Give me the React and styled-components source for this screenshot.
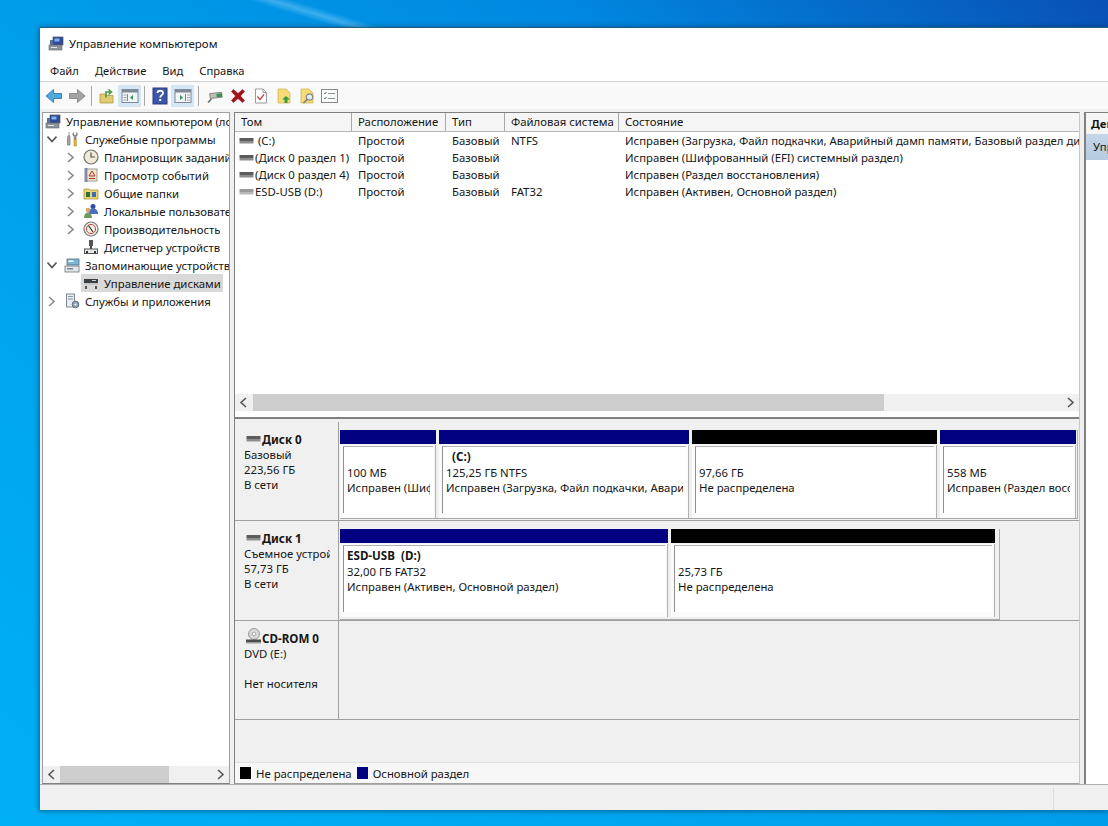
import styled, { createGlobalStyle } from 'styled-components';

const GlobalStyle = createGlobalStyle`
  html, body {
    margin: 0;
    padding: 0;
    height: 100%;
    overflow: hidden;
  }
  body {
    font-family: "Noto Sans", "Open Sans", sans-serif;
    font-size: 11.35px;
    color: #161616;
  }
`;

const Desktop = styled.div`
  width: 1108px;
  height: 826px;
  overflow: hidden;
  padding: 28px 0 0 40px;
  box-sizing: border-box;
  background:
    linear-gradient(17deg, transparent 77.4%, rgba(150, 215, 250, 0.4) 78%, transparent 78.6%),
    linear-gradient(to top right, #00b0f7 0%, #009eea 50%, #0088e0 75%, #0950b5 100%);
`;

const Window = styled.div`
  width: 1068px;
  height: 782px;
  display: flex;
  flex-direction: column;
  background: #f0f0f0;
  box-shadow: 0 -1px 0 #1f5f80, 0 0 5px 1px rgba(0, 40, 70, 0.55);
`;

const TitleBar = styled.div`
  height: 32px;
  flex: none;
  box-sizing: border-box;
  display: flex;
  align-items: center;
  gap: 5px;
  padding: 0 0 1px 8px;
  font-size: 11.5px;
  background: #fff;
`;

const MenuBar = styled.div`
  height: 21px;
  flex: none;
  display: flex;
  align-items: center;
  gap: 16px;
  padding-left: 10px;
  font-size: 11.2px;
  background: #fff;
  border-bottom: 1px solid #d0d0d0;
`;

const Toolbar = styled.div`
  height: 27px;
  flex: none;
  display: flex;
  align-items: center;
  padding-left: 2px;
  background: #f9f9f9;
`;

const ToolButton = styled.div`
  width: 23px;
  height: 22px;
  display: flex;
  align-items: center;
  justify-content: center;
  background: ${(p) => (p.$active ? '#d5e6f5' : 'transparent')};
`;

const ToolSeparator = styled.div`
  width: ${(p) => (p.$wide ? 9 : 7)}px;
  height: 20px;
  display: flex;
  justify-content: center;
  &::before {
    content: '';
    width: 1px;
    background: #a8a8a8;
  }
`;

const Main = styled.div`
  flex: 1;
  min-height: 0;
  display: flex;
  gap: 4px;
  padding: 3px 0 0 2px;
`;

const TreePane = styled.div`
  width: 188px;
  flex: none;
  box-sizing: border-box;
  display: flex;
  flex-direction: column;
  background: #fff;
  border: 1px solid #a0a0a0;
  border-bottom-color: #808080;
  overflow: hidden;
`;

const TreeList = styled.div`
  flex: 1;
  overflow: hidden;
`;

const TreeRow = styled.div`
  height: ${(p) => (p.$root ? 17 : 18)}px;
  display: flex;
  align-items: center;
  white-space: nowrap;
  padding-left: ${(p) => p.$indent}px;
`;

const Chevron = styled.div`
  width: 16px;
  flex: none;
  margin-right: 2px;
  display: flex;
  justify-content: center;
`;

const TreeLabel = styled.div`
  display: flex;
  align-items: center;
  gap: 5px;
  height: 18px;
  padding: 0 2px;
  background: ${(p) => (p.$selected ? '#d9d9d9' : 'transparent')};
`;

const ScrollBar = styled.div`
  height: 17px;
  flex: none;
  display: flex;
  align-items: center;
  background: #f0f0f0;
`;

const ScrollArrow = styled.div`
  width: 17px;
  flex: none;
  display: flex;
  justify-content: center;
`;

const ScrollTrack = styled.div`
  flex: 1;
  height: 100%;
`;

const ScrollThumb = styled.div`
  height: 100%;
  background: #cdcdcd;
  width: ${(p) => p.$size}px;
`;

const CenterPane = styled.div`
  width: 846px;
  flex: none;
  display: flex;
  flex-direction: column;
  box-sizing: border-box;
  border-left: 1px solid #808080;
  border-top: 1px solid #808080;
  border-right: 1px solid #c8c8c8;
  border-bottom: 1px solid #a0a0a0;
`;

const ListArea = styled.div`
  height: 306px;
  flex: none;
  box-sizing: border-box;
  display: flex;
  flex-direction: column;
  background: #fff;
  border-bottom: 2px solid #808080;
  padding-bottom: 6px;
`;

const ListBody = styled.div`
  flex: 1;
  overflow: hidden;
`;

const ColumnHeader = styled.div`
  display: flex;
  height: 19px;
  box-sizing: border-box;
  background: #f5f5f5;
  border-bottom: 1px solid #b8b8b8;
`;

const HeaderCell = styled.div`
  width: ${(p) => p.$width}px;
  flex: ${(p) => (p.$width ? 'none' : 1)};
  box-sizing: border-box;
  padding-left: 6px;
  line-height: 18px;
  white-space: nowrap;
  overflow: hidden;
  border-right: ${(p) => (p.$width ? '1px solid #a8a8a8' : 'none')};
`;

const VolumeRow = styled.div`
  display: flex;
  height: 17px;
  line-height: 17px;
  white-space: nowrap;
`;

const VolumeCell = styled.div`
  width: ${(p) => p.$width}px;
  flex: none;
  box-sizing: border-box;
  padding-left: 6px;
`;

const VolumeName = styled.div`
  width: 117px;
  flex: none;
  box-sizing: border-box;
  padding-left: 4px;
  display: flex;
  align-items: center;
  gap: 1px;
`;

const GraphArea = styled.div`
  flex: 1;
  min-height: 0;
  display: flex;
  flex-direction: column;
  padding-top: 3px;
`;

const DiskRow = styled.div`
  height: ${(p) => p.$height}px;
  flex: none;
  box-sizing: border-box;
  display: flex;
  border-bottom: 1px solid #a0a0a0;
`;

const DiskInfo = styled.div`
  width: 104px;
  flex: none;
  box-sizing: border-box;
  padding: 9px 0 0 9px;
  border-right: 1px solid #a0a0a0;
  line-height: 15px;
  white-space: nowrap;
  overflow: hidden;
`;

const DiskTitle = styled.div`
  display: flex;
  align-items: center;
  gap: 1px;
  font-size: 11.6px;
  font-weight: 700;
  margin-left: 2px;
  height: 16px;
`;

const DiskInfoLine = styled.div`
  width: 86px;
  overflow: hidden;
`;

const DiskBars = styled.div`
  display: flex;
  align-items: flex-start;
  padding: 8px 0 0 1px;
`;

const PartitionFrame = styled.div`
  display: flex;
  gap: 3px;
  width: ${(p) => p.$width}px;
  height: ${(p) => p.$height}px;
  box-sizing: border-box;
  border-right: 1px solid #b0b0b0;
  border-bottom: 1px solid #a8a8a8;
`;

const Partition = styled.div`
  width: ${(p) => p.$width}px;
  flex: none;
  display: flex;
  flex-direction: column;
`;

const PartitionHead = styled.div`
  height: 14px;
  flex: none;
  background: ${(p) => (p.$free ? '#000' : '#000080')};
`;

const PartitionBody = styled.div`
  height: 73px;
  margin-top: 1px;
  box-sizing: border-box;
  padding: 1px 2px 5px 3px;
  background: #fbfbfb;
  border-right: 1px solid #b0b0b0;
`;

const PartitionInner = styled.div`
  height: 100%;
  box-sizing: border-box;
  padding: 2px 3px 0 3px;
  background: #fff;
  border-left: 1px solid #909090;
  border-top: 1px solid #b0b0b0;
  line-height: 15.5px;
  white-space: nowrap;
`;

const PartitionLine = styled.div`
  overflow: hidden;
`;

const PartitionName = styled.div`
  height: 15.5px;
  font-size: 11.6px;
  font-weight: 700;
  white-space: pre;
`;

const Legend = styled.div`
  height: 20px;
  flex: none;
  display: flex;
  align-items: center;
  padding-left: 5px;
  background: #f7f7f7;
  border-top: 1px solid #e0e0e0;
`;

const LegendSwatch = styled.div`
  width: 11px;
  height: 12px;
  margin-right: 5px;
  background: ${(p) => p.$color};
`;

const LegendText = styled.div`
  margin-right: 5px;
`;

const ActionPane = styled.div`
  flex: 1;
  background: #fff;
  border-left: 2px solid #808080;
  border-top: 1px solid #808080;
  white-space: nowrap;
  overflow: hidden;
`;

const ActionHeader = styled.div`
  height: 21px;
  line-height: 21px;
  padding-left: 5px;
  font-weight: 700;
  background: #f5f5f5;
`;

const ActionItem = styled.div`
  height: 26px;
  line-height: 26px;
  padding-left: 7px;
  background: linear-gradient(180deg, #c4d6e8, #b6cbe0);
`;

const StatusBar = styled.div`
  height: 25px;
  flex: none;
  display: flex;
  justify-content: flex-end;
  background: #f0f0f0;
  border-top: 1px solid #b0b0b0;
`;

const StatusCell = styled.div`
  width: 54px;
  border-left: 1px solid #dcdcdc;
  margin-top: 3px;
`;

const ChevronIcon = ({ dir = 'right', color = '#8a8a8a' }) => {
  const points = {
    right: '2,1 7,5.5 2,10',
    down: '0.5,2.5 5,7.5 9.5,2.5',
    left: '7,1 2,5.5 7,10',
  }[dir];
  return (
    <svg width="10" height="11" viewBox="0 0 10 11">
      <polyline points={points} fill="none" stroke={color} strokeWidth="1.6" />
    </svg>
  );
};

const Glyph = ({ children, size = 16, box = 16 }) => (
  <svg width={size} height={size} viewBox={`0 0 ${box} ${box}`} style={{ flex: 'none' }}>
    {children}
  </svg>
);

const ComputerIcon = () => (
  <Glyph>
    <rect x="5" y="1" width="10" height="8" fill="#2b4aa0" stroke="#555" strokeWidth="0.7" />
    <rect x="6.5" y="2.5" width="5" height="3" fill="#7db4ea" />
    <rect x="1" y="9" width="13" height="5" fill="#8c93a0" stroke="#666" strokeWidth="0.6" />
    <rect x="3" y="11" width="6" height="1" fill="#e4e4e4" />
    <rect x="2" y="4" width="3" height="5" fill="#5a6f9a" />
  </Glyph>
);

const ToolsIcon = () => (
  <Glyph>
    <path d="M5 1v3L3.5 6v8H6V6L5 4" fill="#a8a8a8" stroke="#666" strokeWidth="0.6" />
    <path d="M9.5 1.5c-1 1.5-1 3 .8 4.2V8h1.6V5.7c1.8-1.2 1.8-2.7.8-4.2v2.7H9.5z" fill="#9a9a9a" stroke="#555" strokeWidth="0.5" />
    <rect x="10" y="8" width="2.2" height="7" fill="#e3b52b" stroke="#8a6a10" strokeWidth="0.4" />
  </Glyph>
);

const ClockIcon = () => (
  <Glyph>
    <circle cx="8" cy="8" r="7" fill="#efe9d8" stroke="#6f6f6f" strokeWidth="1.2" />
    <path d="M8 3.5V8h4" fill="none" stroke="#555" strokeWidth="1.2" />
  </Glyph>
);

const EventIcon = () => (
  <Glyph>
    <rect x="1.5" y="1" width="3" height="14" fill="#7f90b8" />
    <rect x="4" y="2" width="10" height="12" fill="#f2e6c8" stroke="#777" strokeWidth="0.7" />
    <path d="M9 4L6 9h6z" fill="none" stroke="#b03030" strokeWidth="1" />
    <path d="M6 11.5h6" stroke="#b03030" />
  </Glyph>
);

const SharedIcon = () => (
  <Glyph>
    <path d="M1 4h5l1 1h8v9H1z" fill="#e8d47a" stroke="#a08a30" strokeWidth="0.7" />
    <rect x="3" y="7" width="4" height="5" fill="#2f6f3a" />
    <rect x="9" y="7" width="4" height="5" fill="#3c6fa8" />
  </Glyph>
);

const UsersIcon = () => (
  <Glyph>
    <circle cx="10" cy="3.5" r="2.5" fill="#2f4fa8" />
    <path d="M5.5 11c0-4 2-5.5 4.5-5.5S15 7 15 11z" fill="#4a6cc0" />
    <circle cx="5" cy="7" r="2.3" fill="#d9a860" />
    <path d="M1 15c0-3.5 1.5-5.5 4-5.5S9 11.5 9 15z" fill="#6f9b5a" />
  </Glyph>
);

const PerfIcon = () => (
  <Glyph>
    <circle cx="8" cy="8" r="7" fill="#f6efe6" stroke="#777" strokeWidth="1.2" />
    <circle cx="8" cy="8" r="4.6" fill="none" stroke="#b84a3a" strokeWidth="1" />
    <path d="M5.5 4.5L10 11" stroke="#333" strokeWidth="1.2" />
  </Glyph>
);

const DeviceIcon = () => (
  <Glyph>
    <rect x="6" y="1" width="4" height="6" fill="#555" />
    <rect x="7" y="7" width="2" height="3" fill="#444" />
    <rect x="1.5" y="10" width="13" height="4.5" fill="#e8e8e8" stroke="#555" />
    <rect x="3" y="12" width="2" height="2" fill="#333" />
    <rect x="11" y="12" width="2" height="2" fill="#333" />
  </Glyph>
);

const StorageIcon = () => (
  <Glyph>
    <rect x="1" y="9" width="14" height="6" fill="#e4e7ea" stroke="#6a737c" strokeWidth="0.8" />
    <rect x="3" y="2" width="12" height="6" fill="#7ab5d6" stroke="#5a6f80" strokeWidth="0.8" />
    <rect x="4.5" y="3.5" width="5" height="1.5" fill="#fff" />
    <rect x="3" y="11" width="6" height="1.5" fill="#7c8790" />
  </Glyph>
);

const DiskMgmtIcon = () => (
  <Glyph>
    <rect x="1" y="4" width="14" height="4" fill="#3a3f44" />
    <rect x="1" y="8" width="14" height="2" fill="#c6c6c6" />
    <rect x="2" y="11" width="2" height="3" fill="#555" />
    <rect x="12" y="11" width="2" height="3" fill="#555" />
    <rect x="9" y="5" width="4" height="1" fill="#d0d0d0" />
  </Glyph>
);

const ServicesIcon = () => (
  <Glyph>
    <rect x="2.5" y="1" width="8" height="13" fill="#e9edf2" stroke="#7f8a94" />
    <rect x="4" y="3" width="5" height="1" fill="#8a97a6" />
    <rect x="4" y="5.5" width="5" height="1" fill="#8a97a6" />
    <circle cx="11.5" cy="11.5" r="3.3" fill="#8ea0b4" stroke="#5f6d7c" />
    <circle cx="11.5" cy="11.5" r="1" fill="#fff" />
  </Glyph>
);

const DriveIcon = ({ light }) => (
  <svg width="15" height="8" viewBox="0 0 15 8" style={{ flex: 'none' }}>
    <rect x="0.5" y="1" width="14" height="3" fill={light ? '#9a9a9a' : '#5c5c5c'} />
    <rect x="0.5" y="4" width="14" height="2.5" fill={light ? '#b8b8b8' : '#8d8d8d'} />
  </svg>
);

const CdIcon = () => (
  <svg width="15" height="17" viewBox="0 0 15 17" style={{ flex: 'none', marginTop: -3 }}>
    <circle cx="8" cy="6" r="5.5" fill="#d8d8d8" stroke="#9a9a9a" />
    <circle cx="8" cy="6" r="1.8" fill="#fff" stroke="#aaa" />
    <rect x="0" y="11.5" width="15" height="2.5" fill="#4c4c4c" />
    <rect x="0" y="14" width="15" height="1.5" fill="#9c9c9c" />
  </svg>
);

const BackIcon = () => (
  <Glyph box={18} size={18}>
    <path d="M1 9l7.5-6.5v4h8v5h-8v4z" fill="#4fa8e2" stroke="#3a78ad" strokeWidth="0.9" />
  </Glyph>
);

const ForwardIcon = () => (
  <Glyph box={18} size={18}>
    <path d="M17 9L9.5 2.5v4h-8v5h8v4z" fill="#a4a4a4" stroke="#858585" strokeWidth="0.9" />
  </Glyph>
);

const FolderUpIcon = () => (
  <Glyph>
    <path d="M1 6h5l1 1.5h7V15H1z" fill="#e0cb72" stroke="#a68f3a" strokeWidth="0.7" />
    <path d="M7 9.5V4h4M9.5 1.5L12.5 4l-3 2.5" fill="none" stroke="#4a9a3f" strokeWidth="1.6" />
  </Glyph>
);

const ConsoleTreeIcon = ({ mirrored }) => (
  <Glyph box={18} size={18}>
    <rect x="1" y="2.5" width="16" height="13" fill="#f2f5f8" stroke="#7f8a96" />
    <rect x="1" y="2.5" width="16" height="3" fill="#7f8a96" />
    <path d={mirrored ? 'M11.5 7v7' : 'M6.5 7v7'} stroke="#7f8a96" />
    <path d={mirrored ? 'M6 8l3 2.5L6 13z' : 'M12 8l-3 2.5L12 13z'} fill="#3f8f5a" />
    <path d={mirrored ? 'M13 8h3M13 10.5h3M13 13h3' : 'M2.5 8h3M2.5 10.5h3M2.5 13h3'} stroke="#9aa6b2" />
  </Glyph>
);

const HelpIcon = () => (
  <svg width="16" height="18" viewBox="0 0 16 18" style={{ flex: 'none' }}>
    <rect x="1" y="1" width="14" height="16" fill="#3d55a8" stroke="#2b3c80" />
    <path d="M5.5 6c0-3 5.5-3 5.5 0 0 2-2.8 2.3-2.8 4.5" fill="none" stroke="#fff" strokeWidth="1.8" />
    <rect x="7.2" y="12" width="2" height="2" fill="#fff" />
  </svg>
);

const PlugIcon = () => (
  <Glyph>
    <path d="M1 14.5L4.5 11" stroke="#666" strokeWidth="1.5" />
    <rect x="3" y="5" width="12" height="5" fill="#b8c0b8" stroke="#6f6f6f" strokeWidth="0.7" transform="rotate(-6 8 8)" />
    <rect x="9.5" y="5.5" width="5.5" height="3.5" fill="#3f8f5a" transform="rotate(-6 12 7)" />
  </Glyph>
);

const DeleteIcon = () => (
  <Glyph>
    <path d="M1.5 3.5l2-2L8 5.5l4.5-4 2 2-4 4.5 4 4.5-2 2-4.500-4-4.500 4-2-2 4-4.500z" fill="#a2121c" stroke="#8e0f18" strokeWidth="0.6" />
  </Glyph>
);

const CheckDocIcon = () => (
  <Glyph>
    <path d="M2.5 1H10l3.5 3.5V15h-11zM10 1v3.5h3.5" fill="#fff" stroke="#9a9a9a" />
    <path d="M4.5 8.5L7 11.5l4-5" fill="none" stroke="#b8473f" strokeWidth="1.3" />
  </Glyph>
);

const NoteUpIcon = () => (
  <Glyph>
    <path d="M2 1h8l4 4v10H2z" fill="#f6dc78" stroke="#c9b04a" strokeWidth="0.7" />
    <path d="M10 8l-4 3.5h2.5V15h3v-3.5H14z" fill="#3f9a3a" />
  </Glyph>
);

const NoteSearchIcon = () => (
  <Glyph>
    <path d="M2 1h8l4 4v10H2z" fill="#f6dc78" stroke="#c9b04a" strokeWidth="0.7" />
    <circle cx="10.5" cy="9" r="3.2" fill="#e4edf2" stroke="#858585" strokeWidth="1.2" />
    <path d="M8 11.5L4.5 15" stroke="#777" strokeWidth="1.5" />
  </Glyph>
);

const ListIcon = () => (
  <svg width="17" height="14" viewBox="0 0 17 14" style={{ flex: 'none' }}>
    <rect x="0.5" y="0.5" width="16" height="13" fill="#fafafa" stroke="#8a8a8a" />
    <path d="M3 4l1 1 1.5-2M3 9l1 1 1.5-2" fill="none" stroke="#4f8a6a" strokeWidth="1" />
    <path d="M7 4.5h7M7 9.5h7" stroke="#8f8f8f" />
  </svg>
);

const TREE = [
  { level: 1, open: true, Icon: ToolsIcon, label: 'Служебные программы' },
  { level: 2, arrow: true, Icon: ClockIcon, label: 'Планировщик заданий' },
  { level: 2, arrow: true, Icon: EventIcon, label: 'Просмотр событий' },
  { level: 2, arrow: true, Icon: SharedIcon, label: 'Общие папки' },
  { level: 2, arrow: true, Icon: UsersIcon, label: 'Локальные пользователи' },
  { level: 2, arrow: true, Icon: PerfIcon, label: 'Производительность' },
  { level: 2, Icon: DeviceIcon, label: 'Диспетчер устройств' },
  { level: 1, open: true, Icon: StorageIcon, label: 'Запоминающие устройства' },
  { level: 2, selected: true, Icon: DiskMgmtIcon, label: 'Управление дисками' },
  { level: 1, arrow: true, Icon: ServicesIcon, label: 'Службы и приложения' },
];

const COLUMNS = [
  { title: 'Том', width: 117 },
  { title: 'Расположение', width: 94 },
  { title: 'Тип', width: 59 },
  { title: 'Файловая система', width: 114 },
  { title: 'Состояние' },
];

const VOLUMES = [
  { name: '\u00a0(C:)', fs: 'NTFS', state: 'Исправен (Загрузка, Файл подкачки, Аварийный дамп памяти, Базовый раздел диска)' },
  { name: '(Диск 0 раздел 1)', fs: '', state: 'Исправен (Шифрованный (EFI) системный раздел)' },
  { name: '(Диск 0 раздел 4)', fs: '', state: 'Исправен (Раздел восстановления)' },
  { name: 'ESD-USB (D:)', fs: 'FAT32', state: 'Исправен (Активен, Основной раздел)', light: true },
];

const DISKS = [
  {
    title: 'Диск 0',
    lines: ['Базовый', '223,56 ГБ', 'В сети'],
    height: 99,
    frameWidth: 738,
    frameHeight: 89,
    partitions: [
      { width: 96, name: '', size: '100 МБ', state: 'Исправен (Шифрованный (EFI) системный раздел)' },
      { width: 250, name: '  (C:)', size: '125,25 ГБ NTFS', state: 'Исправен (Загрузка, Файл подкачки, Аварийный дамп памяти)' },
      { width: 245, free: true, name: '', size: '97,66 ГБ', state: 'Не распределена' },
      { width: 136, name: '', size: '558 МБ', state: 'Исправен (Раздел восстановления)' },
    ],
  },
  {
    title: 'Диск 1',
    lines: ['Съемное устройство', '57,73 ГБ', 'В сети'],
    height: 100,
    frameWidth: 660,
    frameHeight: 91,
    partitions: [
      { width: 328, name: 'ESD-USB  (D:)', size: '32,00 ГБ FAT32', state: 'Исправен (Активен, Основной раздел)' },
      { width: 324, free: true, name: '', size: '25,73 ГБ', state: 'Не распределена' },
    ],
  },
];

const TreeItem = ({ item }) => (
  <TreeRow $indent={item.level === 1 ? 1 : 20}>
    <Chevron>
      {item.open && <ChevronIcon dir="down" color="#555" />}
      {item.arrow && <ChevronIcon />}
    </Chevron>
    <TreeLabel $selected={item.selected}>
      <item.Icon />
      {item.label}
    </TreeLabel>
  </TreeRow>
);

const HorizontalScroll = ({ offset, size }) => (
  <ScrollBar>
    <ScrollArrow>
      <ChevronIcon dir="left" color="#555" />
    </ScrollArrow>
    <ScrollTrack>
      <ScrollThumb $size={size} style={{ marginLeft: offset }} />
    </ScrollTrack>
    <ScrollArrow>
      <ChevronIcon color="#555" />
    </ScrollArrow>
  </ScrollBar>
);

const PartitionBox = ({ part }) => (
  <Partition $width={part.width}>
    <PartitionHead $free={part.free} />
    <PartitionBody>
      <PartitionInner>
        <PartitionName>{part.name}</PartitionName>
        <PartitionLine>{part.size}</PartitionLine>
        <PartitionLine>{part.state}</PartitionLine>
      </PartitionInner>
    </PartitionBody>
  </Partition>
);

const DiskLine = ({ disk }) => (
  <DiskRow $height={disk.height}>
    <DiskInfo>
      <DiskTitle>
        <DriveIcon />
        {disk.title}
      </DiskTitle>
      {disk.lines.map((line) => (
        <DiskInfoLine key={line}>{line}</DiskInfoLine>
      ))}
    </DiskInfo>
    <DiskBars>
      <PartitionFrame $width={disk.frameWidth} $height={disk.frameHeight}>
        {disk.partitions.map((part) => (
          <PartitionBox key={part.size} part={part} />
        ))}
      </PartitionFrame>
    </DiskBars>
  </DiskRow>
);

export default function App() {
  return (
    <Desktop>
      <GlobalStyle />
      <Window>
        <TitleBar>
          <ComputerIcon />
          Управление компьютером
        </TitleBar>
        <MenuBar>
          <span>Файл</span>
          <span>Действие</span>
          <span>Вид</span>
          <span>Справка</span>
        </MenuBar>
        <Toolbar>
          <ToolButton><BackIcon /></ToolButton>
          <ToolButton><ForwardIcon /></ToolButton>
          <ToolSeparator />
          <ToolButton><FolderUpIcon /></ToolButton>
          <ToolButton $active><ConsoleTreeIcon /></ToolButton>
          <ToolSeparator />
          <ToolButton><HelpIcon /></ToolButton>
          <ToolButton $active><ConsoleTreeIcon mirrored /></ToolButton>
          <ToolSeparator $wide />
          <ToolButton><PlugIcon /></ToolButton>
          <ToolButton><DeleteIcon /></ToolButton>
          <ToolButton><CheckDocIcon /></ToolButton>
          <ToolButton><NoteUpIcon /></ToolButton>
          <ToolButton><NoteSearchIcon /></ToolButton>
          <ToolButton><ListIcon /></ToolButton>
        </Toolbar>
        <Main>
          <TreePane>
            <TreeList>
              <TreeRow $indent={0} $root>
                <TreeLabel>
                  <ComputerIcon />
                  Управление компьютером (локальный)
                </TreeLabel>
              </TreeRow>
              {TREE.map((item) => (
                <TreeItem key={item.label} item={item} />
              ))}
            </TreeList>
            <HorizontalScroll offset={0} size={109} />
          </TreePane>
          <CenterPane>
            <ListArea>
              <ColumnHeader>
                {COLUMNS.map((col) => (
                  <HeaderCell key={col.title} $width={col.width}>{col.title}</HeaderCell>
                ))}
              </ColumnHeader>
              <ListBody>
                {VOLUMES.map((vol) => (
                  <VolumeRow key={vol.name}>
                    <VolumeName>
                      <DriveIcon light={vol.light} />
                      {vol.name}
                    </VolumeName>
                    <VolumeCell $width={94}>Простой</VolumeCell>
                    <VolumeCell $width={59}>Базовый</VolumeCell>
                    <VolumeCell $width={114}>{vol.fs}</VolumeCell>
                    <VolumeCell>{vol.state}</VolumeCell>
                  </VolumeRow>
                ))}
              </ListBody>
              <HorizontalScroll offset={1} size={631} />
            </ListArea>
            <GraphArea>
              {DISKS.map((disk) => (
                <DiskLine key={disk.title} disk={disk} />
              ))}
              <DiskRow $height={99}>
                <DiskInfo>
                  <DiskTitle>
                    <CdIcon />
                    CD-ROM 0
                  </DiskTitle>
                  <DiskInfoLine>DVD (E:)</DiskInfoLine>
                  <DiskInfoLine>&nbsp;</DiskInfoLine>
                  <DiskInfoLine>Нет носителя</DiskInfoLine>
                </DiskInfo>
              </DiskRow>
            </GraphArea>
            <Legend>
              <LegendSwatch $color="#000" />
              <LegendText>Не распределена</LegendText>
              <LegendSwatch $color="#000080" />
              <LegendText>Основной раздел</LegendText>
            </Legend>
          </CenterPane>
          <ActionPane>
            <ActionHeader>Действия</ActionHeader>
            <ActionItem>Управление дисками</ActionItem>
          </ActionPane>
        </Main>
        <StatusBar>
          <StatusCell />
        </StatusBar>
      </Window>
    </Desktop>
  );
}
